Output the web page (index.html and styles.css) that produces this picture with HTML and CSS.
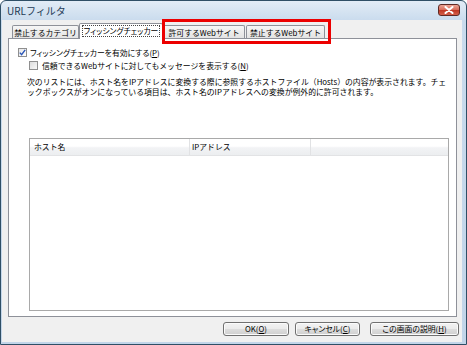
FILE: index.html
```html
<!DOCTYPE html>
<html lang="ja">
<head>
<meta charset="utf-8">
<title>URLフィルタ</title>
<link rel="stylesheet" href="styles.css">
</head>
<body>
<div class="window">
  <div class="titlebar">
    <span class="title">URLフィルタ</span>
    <div class="close">
      <svg width="10" height="8" viewBox="0 0 10 8"><path d="M1.5 1 L8.5 7 M8.5 1 L1.5 7" stroke="#fff" stroke-width="2" stroke-linecap="round"/></svg>
    </div>
  </div>
  <div class="client">
    <div class="tabs">
      <div class="tab t1">禁止するカテゴリ</div>
      <div class="tab t2 selected"><span class="focus">フィッシングチェッカー</span></div>
      <div class="tab t3">許可するWebサイト</div>
      <div class="tab t4">禁止するWebサイト</div>
    </div>
    <div class="panel">
      <div class="check c1">
        <span class="box checked"><svg width="7" height="7" viewBox="0 0 7 7"><path d="M0.8 3.6 L2.6 5.6 L6.2 0.8" fill="none" stroke="#2a56b8" stroke-width="1.4"/></svg></span>
        <span class="label">フィッシングチェッカーを有効にする(<u>P</u>)</span>
      </div>
      <div class="check c2">
        <span class="box"></span>
        <span class="label">信頼できるWebサイトに対してもメッセージを表示する(<u>N</u>)</span>
      </div>
      <p class="desc">
        <span class="line">次のリストには、ホスト名をIPアドレスに変換する際に参照するホストファイル（Hosts）の内容が表示されます。チェ</span>
        <span class="line">ックボックスがオンになっている項目は、ホスト名のIPアドレスへの変換が例外的に許可されます。</span>
      </p>
      <div class="list">
        <div class="lhead">
          <div class="col h1">ホスト名</div>
          <div class="col h2">IPアドレス</div>
          <div class="col h3"></div>
        </div>
      </div>
    </div>
    <div class="buttons">
      <button class="btn ok">OK(<u>O</u>)</button>
      <button class="btn cancel">キャンセル(<u>C</u>)</button>
      <button class="btn help">この画面の説明(<u>H</u>)</button>
    </div>
  </div>
  <div class="highlight"></div>
</div>
</body>
</html>
```

FILE: styles.css
```css
* { box-sizing: border-box; }
html, body { margin: 0; padding: 0; }
body {
  width: 467px;
  height: 345px;
  overflow: hidden;
  font-family: "Noto Sans CJK JP", "Noto Sans", sans-serif;
  font-size: 7.85px;
  color: #000;
  background: #fff;
}
.window {
  position: relative;
  width: 467px;
  height: 345px;
  border: 1px solid #2f4f66;
  border-radius: 6px 6px 0 0;
  background: linear-gradient(#e2ecf6 0px, #c9dbed 20px, #c2d5e9 100%);
  padding: 0 4px 2px 1px;
  display: flex;
  flex-direction: column;
}
.titlebar {
  height: 19px;
  flex: 0 0 19px;
  display: flex;
  justify-content: space-between;
  align-items: flex-start;
  padding: 0 2px 0 5px;
}
.title {
  font-size: 10px;
  line-height: 19px;
  color: #243a55;
}
.close {
  margin-top: 3px;
  width: 22px;
  height: 12px;
  border: 1px solid #5e2a25;
  border-radius: 3px;
  background: linear-gradient(#eba596 0%, #d9705f 45%, #c03a27 55%, #d5604a 100%);
  display: flex;
  align-items: center;
  justify-content: center;
}
.close svg { display: block; }
.client {
  flex: 1;
  background: #f0f0f0;
  padding: 3px 3px 0 6px;
  display: flex;
  flex-direction: column;
}
.tabs {
  height: 15px;
  flex: 0 0 15px;
  display: flex;
  align-items: flex-end;
  position: relative;
  z-index: 1;
}
.tab {
  height: 13px;
  border: 1px solid #8e9199;
  border-bottom: none;
  border-radius: 2px 2px 0 0;
  background: linear-gradient(#f6f6f6, #e3e3e3);
  display: flex;
  align-items: center;
  justify-content: center;
  line-height: 11px;
  white-space: nowrap;
  overflow: hidden;
}
.t1 { width: 67px; margin-left: 4px; }
.t2 { width: 84px; font-feature-settings: "palt" 1; }
.t3 { width: 82px; }
.t4 { width: 79px; margin-left: 1px; }
.tab.selected {
  height: 16px;
  margin-bottom: -1px;
  background: #fff;
  align-items: flex-start;
  padding-top: 1px;
}
.focus {
  border: 1px dotted #444;
  padding: 0 1px;
  line-height: 10px;
}
.panel {
  height: 279px;
  flex: 0 0 279px;
  margin-right: 2px;
  border: 1px solid #8e9199;
  background: #fff;
  display: flex;
  flex-direction: column;
}
.check {
  display: flex;
  align-items: center;
  height: 11px;
  gap: 3px;
  white-space: nowrap;
}
.c1 { margin: 8px 0 0 9px; font-feature-settings: "palt" 1; }
.c2 { margin: 2px 0 0 20px; gap: 4px; }
.box {
  width: 9px;
  height: 9px;
  flex: 0 0 9px;
  border: 1px solid #8f8f8f;
  background: linear-gradient(135deg, #dcdcdc, #f8f8f8);
  display: flex;
  align-items: center;
  justify-content: center;
}
.box.checked { background: linear-gradient(135deg, #e6e6e6, #ffffff); }
.box svg { display: block; }
.label { line-height: 11px; }
.desc {
  margin: 6px 0 0 18px;
  line-height: 9.5px;
}
.line { display: block; white-space: nowrap; }
.list {
  margin: 42px 7px 0 20px;
  height: 173px;
  border: 1px solid #a9a9a9;
  background: #fff;
}
.lhead {
  height: 17px;
  display: flex;
  border-bottom: 1px solid #e2e3e5;
  background: linear-gradient(#ffffff 0%, #ffffff 45%, #f2f3f5 55%, #eceef0 100%);
}
.col {
  display: flex;
  align-items: center;
  border-right: 1px solid #e1e2e4;
  line-height: 10px;
}
.h1 { width: 160px; padding-left: 4px; }
.h2 { width: 121px; padding-left: 2px; }
.h3 { flex: 1; border-right: none; }
.buttons {
  display: flex;
  justify-content: flex-end;
  margin-top: 5px;
}
.btn {
  height: 14px;
  padding: 0;
  font-family: inherit;
  font-size: 7.85px;
  font-feature-settings: "palt" 1;
  line-height: 12px;
  color: #000;
  border: 1px solid #707070;
  border-radius: 3px;
  background: linear-gradient(#f3f3f3 0%, #ebebeb 48%, #dddddd 52%, #cfcfcf 100%);
  box-shadow: inset 0 0 0 1px #fbfbfb;
}
.ok { width: 66px; margin-right: 6px; }
.cancel { width: 65px; margin-right: 10px; }
.help { width: 89px; }
.highlight {
  position: absolute;
  left: 161px;
  top: 18px;
  width: 169px;
  height: 25px;
  border: 3px solid #ec0000;
  z-index: 5;
}
```
